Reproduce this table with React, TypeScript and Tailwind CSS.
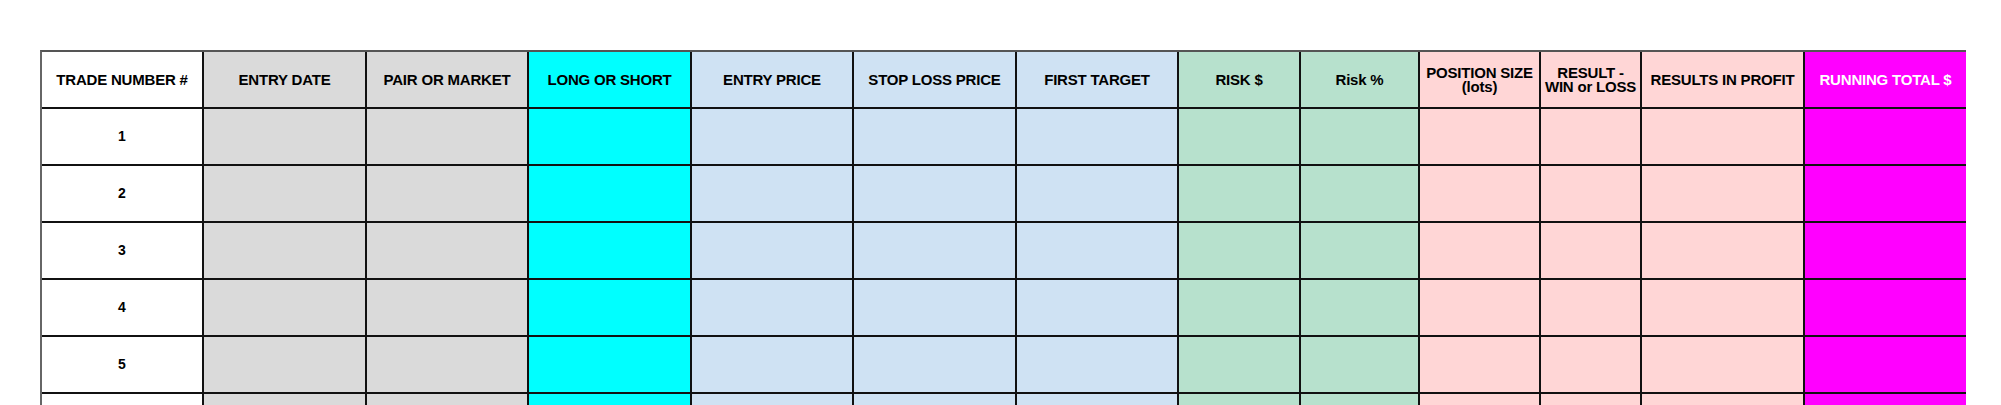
import React from "react";

type Col = { label: React.ReactNode; bg: string; text?: string };

const columns: Col[] = [
  { label: "TRADE NUMBER #", bg: "bg-white" },
  { label: "ENTRY DATE", bg: "bg-[#dadada]" },
  { label: "PAIR OR MARKET", bg: "bg-[#dadada]" },
  { label: "LONG OR SHORT", bg: "bg-[#00ffff]" },
  { label: "ENTRY PRICE", bg: "bg-[#cfe2f3]" },
  { label: "STOP LOSS PRICE", bg: "bg-[#cfe2f3]" },
  { label: "FIRST TARGET", bg: "bg-[#cfe2f3]" },
  { label: "RISK $", bg: "bg-[#b7e1cd]" },
  { label: "Risk %", bg: "bg-[#b7e1cd]" },
  {
    label: (
      <>
        POSITION SIZE
        <br />
        (lots)
      </>
    ),
    bg: "bg-[#ffd6d6]",
  },
  {
    label: (
      <>
        RESULT -
        <br />
        WIN or LOSS
      </>
    ),
    bg: "bg-[#ffd6d6]",
  },
  { label: "RESULTS IN PROFIT", bg: "bg-[#ffd6d6]" },
  { label: "RUNNING TOTAL $", bg: "bg-[#ff00ff]", text: "text-white" },
];

// the sixth row is only a sliver at the bottom of the view, so no number shows
const rows = [1, 2, 3, 4, 5, 0];

export default function App() {
  return (
    <div className="h-[405px] w-[2001px] overflow-hidden bg-white font-['Liberation_Sans',Arial,sans-serif]">
      <div className="ml-[40px] mt-[50px] grid w-fit grid-cols-[160px_161px_160px_161px_160px_161px_160px_120px_117px_119px_99px_161px_161px] gap-[2px] border-l-2 border-t-2 border-l-[#666] border-t-[#555] bg-[#111]">
        {columns.map((c, i) => (
          <div
            key={i}
            className={`flex h-[55px] items-center justify-center whitespace-nowrap text-center text-[15px] font-bold leading-[14px] tracking-[-0.2px] ${c.bg} ${c.text ?? "text-black"}`}
          >
            <span>{c.label}</span>
          </div>
        ))}
        {rows.map((n, r) =>
          columns.map((c, i) => (
            <div
              key={`${r}-${i}`}
              className={`flex h-[55px] items-center justify-center text-[14px] font-bold ${c.bg}`}
            >
              {i === 0 && n > 0 ? n : null}
            </div>
          ))
        )}
      </div>
    </div>
  );
}
